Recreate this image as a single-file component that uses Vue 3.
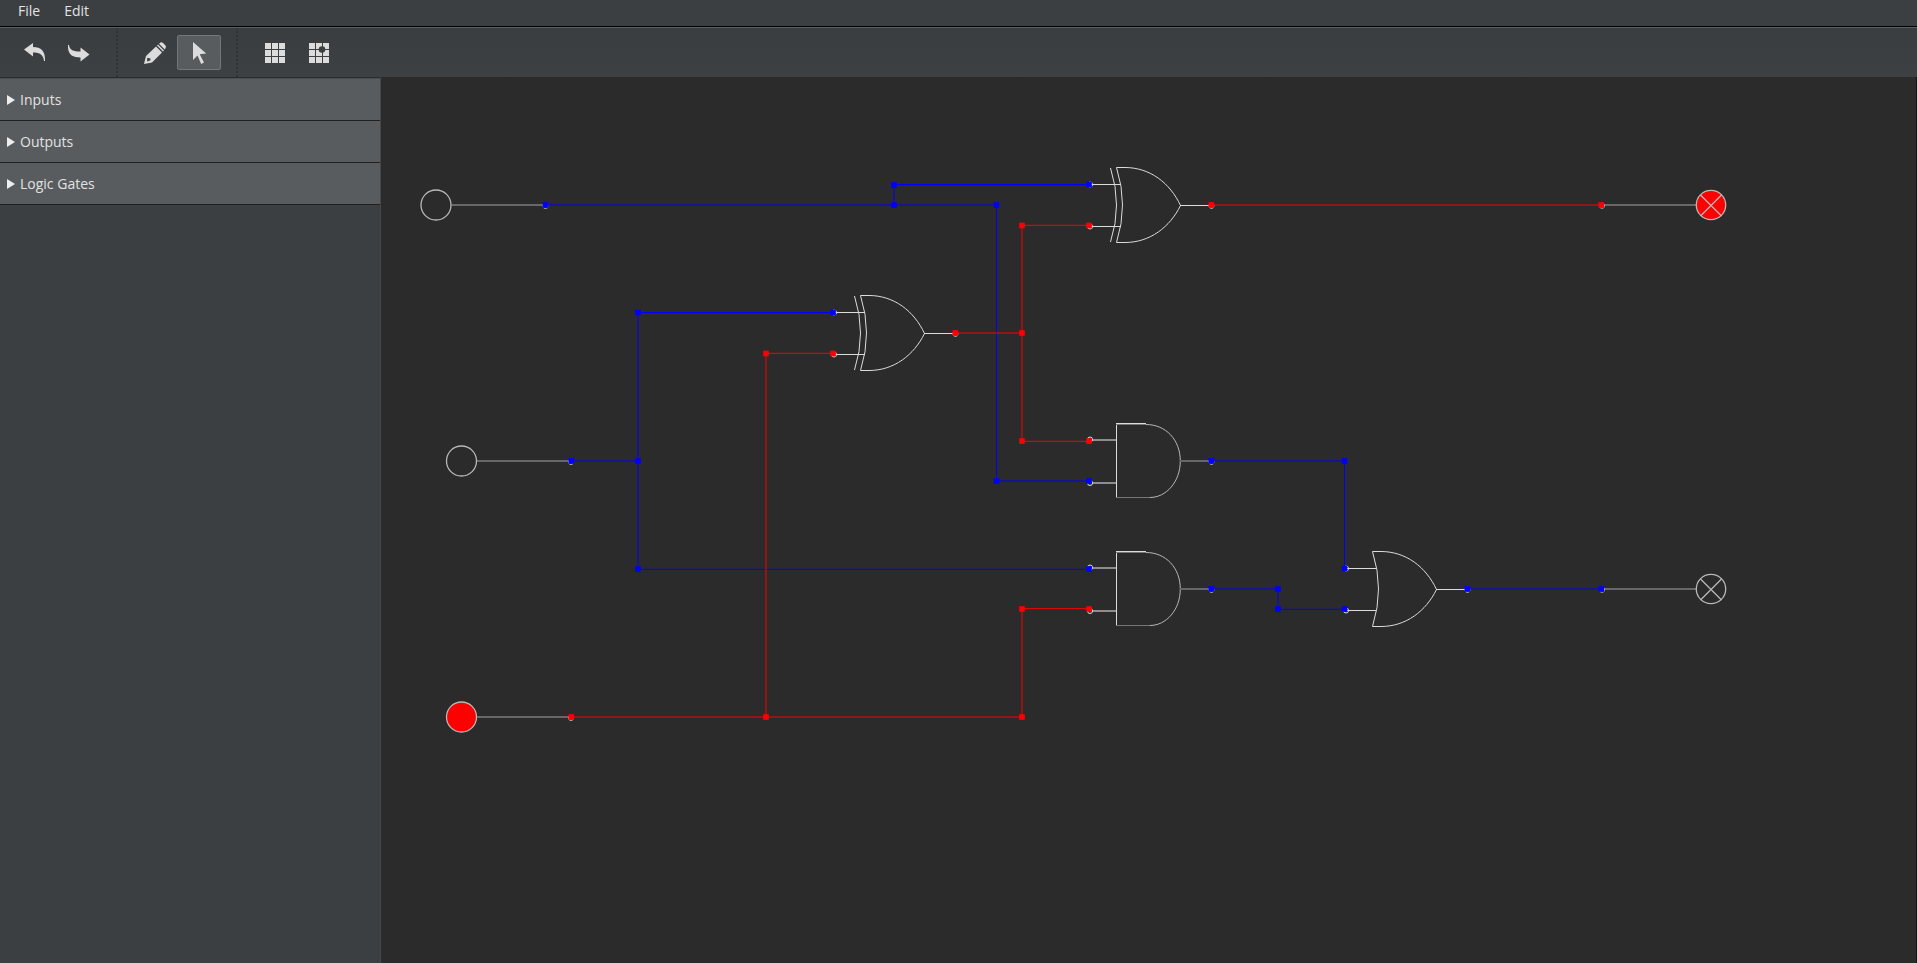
<script setup>
import { ref } from 'vue'

const tool = ref('select')
const menus = ['File', 'Edit']
const sections = ['Inputs', 'Outputs', 'Logic Gates']

const wires = [
  { on: false, d: 'M545 205H996.5V481H1089 M894 205V184.5H1089' },
  { on: false, d: 'M571 461H638 M834 312.5H638V569.3H1089' },
  { on: true, d: 'M571 717H1022V608.7H1089 M766 717V353.3H834' },
  { on: true, d: 'M955 333H1022 M1089 225.3H1022V441.3H1089' },
  { on: true, d: 'M1211 205H1601' },
  { on: false, d: 'M1211 461H1344.5V569' },
  { on: false, d: 'M1211 589H1278V609.3H1345' },
  { on: false, d: 'M1467 589H1601' },
]
const joints = [
  { on: false, at: [[545.5, 205], [894, 205], [894, 185], [1089, 184.5], [996.5, 205], [996.5, 481], [1089, 481], [571.3, 461], [638, 461], [638, 312.5], [833, 312.5], [638, 569], [1089, 569], [1211.3, 461], [1344.5, 461], [1344.5, 568.5], [1211.3, 589], [1278, 589], [1278, 609], [1344.5, 609], [1467.3, 589], [1601.3, 589]] },
  { on: true, at: [[571.3, 717], [766, 717], [766, 353.5], [833, 353.5], [1022, 717], [1022, 609], [1089, 609], [955.3, 333], [1022, 333], [1022, 225.5], [1089, 225.5], [1022, 441], [1089, 441], [1211.3, 205], [1601.3, 205]] },
]
const orGates = [
  { x: 1116, y: 205, xor: true },
  { x: 860, y: 333, xor: true },
  { x: 1372, y: 589, xor: false },
]
const andGates = [{ x: 1116, y: 461 }, { x: 1116, y: 589 }]
const switches = [
  { x: 436, y: 205, on: false },
  { x: 461.5, y: 461, on: false },
  { x: 461.5, y: 717, on: true },
]
const lamps = [{ x: 1711, y: 205, on: true }, { x: 1711, y: 589, on: false }]
</script>

<template>
  <div class="app">
    <nav class="menubar">
      <button v-for="m in menus" :key="m" type="button">{{ m }}</button>
    </nav>
    <div class="toolbar" role="toolbar">
      <div class="group">
        <button type="button" aria-label="Undo">
          <svg width="22" height="22" viewBox="0 0 22 22"><path d="M0 7.500 9 1V5C17 5 21.500 9 21 19H20C19.500 13 16 10.500 9 10.500V14.500Z" /></svg>
        </button>
        <button type="button" aria-label="Redo">
          <svg width="22" height="22" viewBox="0 0 22 22"><path d="M0 3H1C1.500 8 5.500 9.500 12.500 9.500V5.500L21.500 12.500 12.500 19.500V15.500C4.500 15.500 -.5 13 0 3Z" /></svg>
        </button>
      </div>
      <div class="group">
        <button type="button" aria-label="Draw" :class="{ active: tool === 'draw' }" @click="tool = 'draw'">
          <svg width="22" height="22" viewBox="0 0 22 22">
            <path fill-rule="evenodd" d="M0 22 2 14 12 4.500 18 10.500 8 20.500ZM3.300 15.800 3 19.500 6.300 18.500 6.500 16.500Z" />
            <path d="M13 3.500 14 2.600 20 8.500 19 9.500ZM15 1.800 17 .2Q18 0 19 1L21.500 3.500Q22.300 5 21.500 6L20.800 7.600Z" />
          </svg>
        </button>
        <button type="button" aria-label="Select" :class="{ active: tool === 'select' }" @click="tool = 'select'">
          <svg width="22" height="22" viewBox="0 0 22 22"><path d="M5 0 18.200 11.500 11.700 12.200 16 20.500 13.200 22 9.500 13.500 5 18Z" /></svg>
        </button>
      </div>
      <div class="group">
        <button type="button" aria-label="Show grid">
          <svg width="22" height="22" viewBox="0 0 22 22" shape-rendering="crispEdges"><path d="M1 1h6v6H1zM8 1h6v6H8zM15 1h6v6h-6zM1 8h6v6H1zM8 8h6v6H8zM15 8h6v6h-6zM1 15h6v6H1zM8 15h6v6H8zM15 15h6v6h-6z" /></svg>
        </button>
        <button type="button" aria-label="Snap to grid">
          <svg width="22" height="22" viewBox="0 0 22 22">
            <path shape-rendering="crispEdges" d="M1 1h6v6H1zM8 1h6v6H8zM15 1h6v6h-6zM1 8h6v6H1zM8 8h6v6H8zM15 8h6v6h-6zM1 15h6v6H1zM8 15h6v6H8zM15 15h6v6h-6z" />
            <circle class="hole" cx="14" cy="7.500" r="3.300" />
          </svg>
        </button>
      </div>
    </div>
    <div class="workspace">
      <aside class="palette">
        <button v-for="s in sections" :key="s" type="button" aria-expanded="false">
          <svg width="8" height="10" viewBox="0 0 8 10"><path d="M0 0 8 5 0 10Z" /></svg>
          <span>{{ s }}</span>
        </button>
      </aside>
      <main class="canvas">
        <svg class="circuit" width="100%" height="100%">
          <g transform="translate(-381 -77)">
            <g v-for="(g, i) in orGates" :key="'o' + i" class="gate" :transform="`translate(${g.x} ${g.y})`">
              <path d="M.5 -37.500H9C34 -37.500 54 -22 64.500 .5C54 22 34 37.500 9 37.500H.5Q12.500 0 .5 -37.500" />
              <path v-if="g.xor" d="M-5.500 -37Q6.500 0 -5.500 37" />
              <path :d="g.xor ? 'M-25 -20.500H5 M-25 21.500H5' : 'M-25 -20.500H4 M-25 21.500H4'" />
              <path d="M64 .5H95" />
              <circle cx="-26" cy="-20.500" r="2.500" /><circle cx="-26" cy="21.500" r="2.500" /><circle cx="95.500" cy=".8" r="2.500" />
            </g>
            <g v-for="(g, i) in andGates" :key="'a' + i" class="gate" :transform="`translate(${g.x} ${g.y})`">
              <path class="dim" d="M30 -36.500C50 -36.500 64.300 -21 64.300 0S50 36.500 34 36.500" />
              <path d="M.5 -38V37 M0 -37.500H30" />
              <path class="faint" d="M0 -36.500H30 M0 36.500H34" />
              <path class="pin" d="M-24 -21H0 M-24 22H0" />
              <path class="lead" d="M64 0H95" />
              <circle cx="-26" cy="-21.500" r="2.500" /><circle cx="-26" cy="22" r="2.500" /><circle cx="95.500" cy=".8" r="2.500" />
            </g>
            <g v-for="(s, i) in switches" :key="'s' + i" class="gate">
              <path class="lead" :d="`M${s.x + 15.500} ${s.y}H${s.x + 109}`" />
              <circle class="dim" :cx="s.x + 109.500" :cy="s.y + 1" r="2.500" />
              <circle class="ring" :class="{ lit: s.on }" :cx="s.x" :cy="s.y" r="15" />
            </g>
            <g v-for="(l, i) in lamps" :key="'l' + i" class="gate">
              <path class="lead" :d="`M${l.x - 108} ${l.y}H${l.x - 15}`" />
              <circle class="dim" :cx="l.x - 109" :cy="l.y + .8" r="2.500" />
              <circle class="ring" :class="{ lit: l.on }" :cx="l.x" :cy="l.y" r="14.700" />
              <path class="ring" :d="`M${l.x - 10.500} ${l.y - 10}l21 21m0 -21l-21 21`" />
            </g>
            <path v-for="(w, i) in wires" :key="'w' + i" class="wire" :class="{ on: w.on }" :d="w.d" />
            <g v-for="(j, i) in joints" :key="'j' + i" class="joint" :class="{ on: j.on }">
              <rect v-for="(p, k) in j.at" :key="k" :x="p[0] - 2.800" :y="p[1] - 2.800" width="5.600" height="5.600" />
            </g>
          </g>
        </svg>
      </main>
    </div>
  </div>
</template>

<style>
body { margin: 0; background: #2b2b2b; }
</style>

<style scoped>
.app {
  display: flex;
  flex-direction: column;
  height: 100vh;
  font: 14px/20px "Open Sans", "Noto Sans", sans-serif;
  color: #e2e2e2;
  background: #3c3f41;
}
button {
  margin: 0;
  border: 0;
  padding: 0;
  background: none;
  color: inherit;
  font: inherit;
}
.menubar {
  display: flex;
  flex: none;
  gap: 24px;
  height: 26px;
  padding: 0 18px;
  border-bottom: 1px solid #000;
}
.menubar button { padding-bottom: 4px; }
.toolbar {
  display: flex;
  flex: none;
  height: 49px;
  border-top: 1px solid #5c6062;
  background: linear-gradient(#3a3d3f, #3e4143);
}
.group {
  display: flex;
  align-items: center;
  padding: 0 15px 0 13px;
}
.group + .group {
  border-left: 2px dotted #303335;
  padding-left: 15px;
}
.group button {
  display: flex;
  align-items: center;
  justify-content: center;
  width: 44px;
  height: 35px;
  box-sizing: border-box;
  border: 1px solid transparent;
  border-radius: 2px;
}
.group button.active {
  border-color: #737779;
  background: #585c5e;
}
.group svg { fill: #dcdcdc; }
.group .hole { fill: #3c3f41; }
.workspace {
  display: flex;
  flex: 1;
  min-height: 0;
}
.palette {
  flex: none;
  width: 380px;
  border-top: 1px solid #2b2b2b;
  border-right: 1px solid #45484a;
}
.palette button {
  display: flex;
  align-items: center;
  gap: 5px;
  width: 100%;
  height: 42px;
  padding: 0 7px;
  border-bottom: 1px solid #1e2022;
  background: #585c5e;
}
.palette button:first-child { height: 43px; border-top: 1px solid #4a4e50; }
.palette svg { fill: #eee; }
.canvas {
  flex: 1;
  min-width: 0;
  background: #2b2b2b;
  border-right: 1px solid #141414;
}
.circuit { display: block; }
.gate { fill: none; stroke: #dcdcdc; stroke-width: 1; }
.dim { stroke: #b8b8b8; }
.ring { stroke: #b8b8b8; stroke-width: 1.3; }
.faint { stroke: #777; }
.pin { stroke: #8c8c8c; stroke-width: 2; }
.lead { stroke: #686868; stroke-width: 2; }
.lit { fill: #f00; }
.wire { fill: none; stroke: #00f; }
.wire.on { stroke: #f00; }
.joint { fill: #00f; }
.joint.on { fill: #f00; }
</style>
